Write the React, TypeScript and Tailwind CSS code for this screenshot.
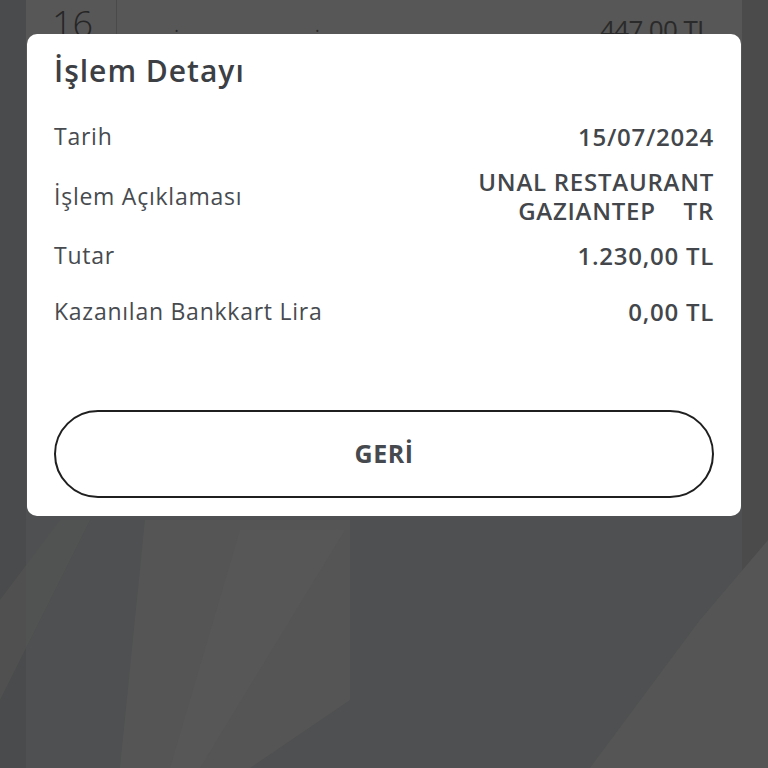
import * as React from 'react'

const rows = [
  { label: 'Tarih', value: '15/07/2024', className: 'mt-[27px] h-[36px]' },
  {
    label: 'İşlem Açıklaması',
    value: 'UNAL RESTAURANT\nGAZIANTEP    TR',
    className: 'mt-[13px] h-[58px]',
  },
  { label: 'Tutar', value: '1.230,00 TL', className: 'mt-[12px] h-[36px]' },
  { label: 'Kazanılan Bankkart Lira', value: '0,00 TL', className: 'mt-[20px] h-[36px]' },
]

function Backdrop() {
  return (
    <svg
      className="absolute inset-0"
      width="768"
      height="768"
      viewBox="0 0 768 768"
      aria-hidden="true"
    >
      <rect width="768" height="768" fill="#4f5051" />
      <rect x="0" y="0" width="26" height="768" fill="#4a4b4c" />
      <rect x="742" y="0" width="26" height="768" fill="#4b4b4c" />
      <polygon points="145,520 350,520 350,700 250,768 120,768" fill="#555555" />
      <polygon points="240,530 345,530 200,768 170,768" fill="#595959" opacity="0.6" />
      <polygon points="700,620 768,540 768,768 590,768" fill="#555555" />
      <polygon points="0,600 60,520 90,520 0,700" fill="#535353" opacity="0.7" />
    </svg>
  )
}

export default function App() {
  return (
    <div
      className="relative w-[768px] h-[768px] overflow-hidden bg-[#4f5051]"
      style={{ fontFamily: '"Open Sans", "Noto Sans", sans-serif' }}
    >
      <Backdrop />

      {/* list row behind the modal */}
      <div className="relative flex h-[60px] bg-[#575757] mx-[26px]">
        <div className="w-[91px] border-r border-[#4a4a4a] pl-[26px] pt-[2px]">
          <span className="text-[36px] font-light leading-[44px] text-[#262626]">16</span>
        </div>
        <div className="flex-1 flex justify-between items-start pl-[22px] pr-[32px]">
          <span className="mt-[26px] text-[20px] text-[#2a2a2a]">AYTİMUR ECZANESİ</span>
          <span className="mt-[10px] text-[26px] text-[#2a2a2a] tracking-tight">447,00 TL</span>
        </div>
      </div>

      {/* modal */}
      <div className="absolute left-[27px] top-[34px] w-[714px] h-[482px] rounded-[10px] bg-white px-[27px] flex flex-col">
        <div className="mt-[17px] h-[40px] text-[30px] font-semibold leading-[40px] tracking-[1px] text-[#3c4044]">
          İşlem Detayı
        </div>

        {rows.map(row => (
          <div key={row.label} className={`flex items-center justify-between ${row.className}`}>
            <span className="text-[23px] leading-[29px] tracking-[0.75px] text-[#474b4f]">
              {row.label}
            </span>
            <span className="text-right text-[24px] font-semibold leading-[29px] tracking-[0.75px] text-[#43474b] whitespace-pre">
              {row.value}
            </span>
          </div>
        ))}

        <button className="mt-[81px] h-[88px] w-full rounded-full border-2 border-[#1f1f1f] bg-white text-[25px] font-bold tracking-[0.5px] text-[#464a4e]">
          GERİ
        </button>
      </div>
    </div>
  )
}
